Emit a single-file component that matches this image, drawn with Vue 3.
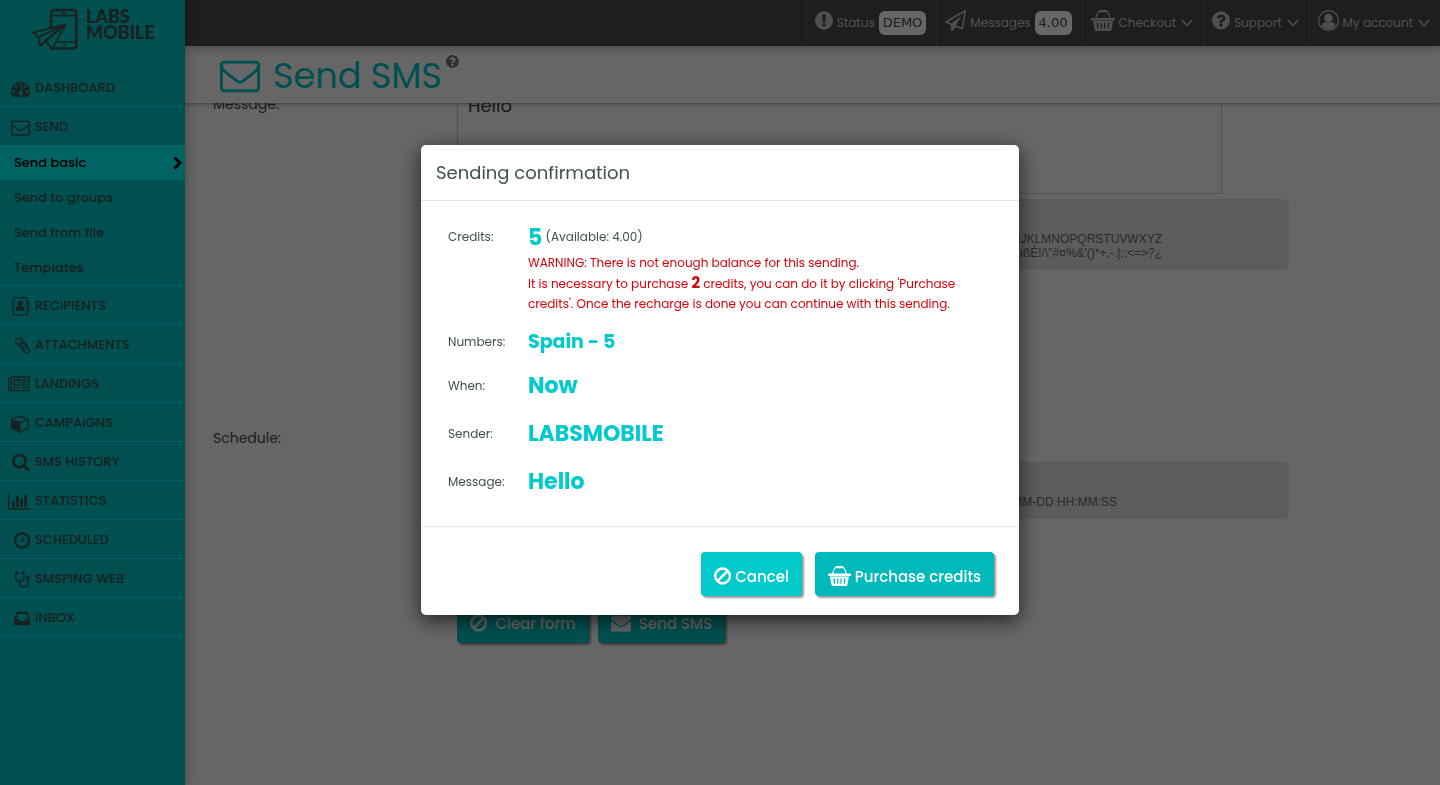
<template>
  <div class="page">
    <aside class="sidebar">
      <a class="logo" href="#">
        <svg viewBox="0 0 47 43" aria-hidden="true">
          <rect class="line" x="19" y="2" width="25.4" height="38.4" rx="2.6" />
          <path class="line thin" d="M19 7.6H44.4M24 34H44.4M29 4.9h5M31 37.2h3" />
          <path class="plane" d="M33.3 16.3 1 24.6l5.6 4.8ZM33.3 16.3 6.6 29.4 8.2 38l5-5.4ZM33.3 16.3 13 32.6l7.4 8.6ZM33.3 16.3 8.2 38" />
        </svg>
        <span>LABS<br />MOBILE</span>
      </a>
      <nav>
        <template v-for="item in menu" :key="item.label">
          <a href="#" class="menu-item" :class="{ open: item.children }">
            <span class="menu-icon">
              <svg :viewBox="icons[item.icon].box"><path :d="icons[item.icon].d" /></svg>
            </span>
            {{ item.label }}
          </a>
          <div v-if="item.children" class="submenu">
            <a v-for="(child, idx) in item.children" :key="child" href="#" :class="{ active: idx === 0 }">
              {{ child }}
              <svg v-if="idx === 0" viewBox="0 0 10 14"><path d="m1.5 1.5 5.5 5.5-5.5 5.5" /></svg>
            </a>
          </div>
        </template>
      </nav>
    </aside>

    <div class="main">
      <header class="topbar">
        <a v-for="item in topItems" :key="item.label" href="#" class="top-item">
          <svg class="top-icon" :viewBox="icons[item.icon].box"><path :d="icons[item.icon].d" /></svg>
          <span>{{ item.label }}</span>
          <span v-if="item.badge" class="badge">{{ item.badge }}</span>
          <svg v-else class="caret" viewBox="0 0 12 8"><path d="m1 1 5 5.4L11 1" /></svg>
        </a>
      </header>

      <div class="heading">
        <svg class="heading-icon" :viewBox="icons.envelopeO.box"><path :d="icons.envelopeO.d" /></svg>
        <h1>Send SMS</h1>
        <svg class="heading-help" :viewBox="icons.question.box"><path :d="icons.question.d" /></svg>
      </div>

      <div class="content">
        <form class="form" @submit.prevent="showModal = true">
          <div class="form-row message-row">
            <label for="message">Message:</label>
            <div>
              <textarea id="message" v-model="message"></textarea>
              <p class="help message-help">
                0123456789 abcdefghijklmnopqrstuvwxyz ABCDEFGHIJKLMNOPQRSTUVWXYZ<br />
                ÄäàÅåÆæèéìñòÖöøÜüùß{{ symbols }}
              </p>
            </div>
          </div>
          <div class="form-row schedule-row">
            <label for="schedule">Schedule:</label>
            <div>
              <input id="schedule" v-model="schedule" type="text" />
              <p class="help schedule-help">YYYY-MM-DD HH:MM:SS</p>
            </div>
          </div>
          <div class="form-row">
            <div class="form-actions">
              <button type="reset" class="btn">
                <svg :viewBox="icons.ban.box"><path :d="icons.ban.d" /></svg>
                Clear form
              </button>
              <button type="submit" class="btn">
                <svg :viewBox="icons.envelope.box"><path :d="icons.envelope.d" /></svg>
                Send SMS
              </button>
            </div>
          </div>
        </form>
      </div>
    </div>

    <div v-if="showModal" class="overlay">
      <section class="modal" role="dialog" aria-labelledby="modal-title">
        <h2 id="modal-title">Sending confirmation</h2>
        <dl>
          <dt class="credits-label">Credits:</dt>
          <dd class="credits">
            <div><strong>5</strong> (Available: 4.00)</div>
            <p class="warning">WARNING: There is not enough balance for this sending.</p>
            <p class="warning">
              It is necessary to purchase <b>2</b> credits, you can do it by clicking 'Purchase
              credits'. Once the recharge is done you can continue with this sending.
            </p>
          </dd>
          <dt>Numbers:</dt>
          <dd class="numbers">Spain - 5</dd>
          <dt>When:</dt>
          <dd>Now</dd>
          <dt>Sender:</dt>
          <dd>LABSMOBILE</dd>
          <dt>Message:</dt>
          <dd>{{ message }}</dd>
        </dl>
        <footer>
          <button type="button" class="btn" @click="showModal = false">
            <svg :viewBox="icons.ban.box"><path :d="icons.ban.d" /></svg>
            Cancel
          </button>
          <button type="button" class="btn purchase">
            <svg :viewBox="icons.basket.box"><path :d="icons.basket.d" /></svg>
            Purchase credits
          </button>
        </footer>
      </section>
    </div>
  </div>
</template>

<script setup>
import { ref } from 'vue'

const showModal = ref(true)
const message = ref('Hello')
const schedule = ref('')
const symbols = 'É!/\\"#¤%&\'()*+,-.|:;<=>?¿'

const menu = [
  { label: 'DASHBOARD', icon: 'dashboard' },
  {
    label: 'SEND',
    icon: 'envelopeO',
    children: ['Send basic', 'Send to groups', 'Send from file', 'Templates'],
  },
  { label: 'RECIPIENTS', icon: 'book' },
  { label: 'ATTACHMENTS', icon: 'clip' },
  { label: 'LANDINGS', icon: 'news' },
  { label: 'CAMPAIGNS', icon: 'cube' },
  { label: 'SMS HISTORY', icon: 'search' },
  { label: 'STATISTICS', icon: 'chart' },
  { label: 'SCHEDULED', icon: 'clock' },
  { label: 'SMSPING WEB', icon: 'stethoscope' },
  { label: 'INBOX', icon: 'inbox' },
]

const topItems = [
  { label: 'Status', icon: 'exclamation', badge: 'DEMO' },
  { label: 'Messages', icon: 'plane', badge: '4.00' },
  { label: 'Checkout', icon: 'basket' },
  { label: 'Support', icon: 'question' },
  { label: 'My account', icon: 'user' },
]

const icons = {
  dashboard: {
    box: '0 0 1792 1792',
    d: 'M384 1152q0-53-37.5-90.5t-90.5-37.5-90.5 37.5-37.5 90.5 37.5 90.5 90.5 37.5 90.5-37.5 37.5-90.5zm192-448q0-53-37.5-90.5t-90.5-37.5-90.5 37.5-37.5 90.5 37.5 90.5 90.5 37.5 90.5-37.5 37.5-90.5zm428 481l101-382q6-26-7.5-48.5t-38.5-29.5-48 6.5-30 39.5l-101 382q-60 5-107 43.5t-63 98.5q-20 77 20 146t117 89 146-20 89-117q16-60-6-117t-72-91zm660-33q0-53-37.5-90.5t-90.5-37.5-90.5 37.5-37.5 90.5 37.5 90.5 90.5 37.5 90.5-37.5 37.5-90.5zm-640-640q0-53-37.5-90.5t-90.5-37.5-90.5 37.5-37.5 90.5 37.5 90.5 90.5 37.5 90.5-37.5 37.5-90.5zm448 192q0-53-37.5-90.5t-90.5-37.5-90.5 37.5-37.5 90.5 37.5 90.5 90.5 37.5 90.5-37.5 37.5-90.5zm320 448q0 261-141 483-19 29-54 29h-1402q-35 0-54-29-141-221-141-483 0-182 71-348t191-286 286-191 348-71 348 71 286 191 191 286 71 348z',
  },
  envelopeO: {
    box: '0 0 1792 1792',
    d: 'M1664 1504v-768q-32 36-69 66-268 206-426 338-51 43-83 67t-86.5 48.5-102.5 24.5h-2q-48 0-102.5-24.5t-86.5-48.5-83-67q-158-132-426-338-37-30-69-66v768q0 13 9.5 22.5t22.5 9.5h1472q13 0 22.5-9.5t9.5-22.5zm0-1051v-24.5l-.5-13-3-12.5-5.5-9-9-7.5-14-2.5h-1472q-13 0-22.5 9.5t-9.5 22.5q0 168 147 284 193 152 401 317 6 5 35 29.5t46 37.5 44.5 31.5 50.5 27.5 43 9h2q20 0 43-9t50.5-27.5 44.5-31.5 46-37.5 35-29.5q208-165 401-317 54-43 100.5-115.5t46.5-131.5zm128-37v1088q0 66-47 113t-113 47h-1472q-66 0-113-47t-47-113v-1088q0-66 47-113t113-47h1472q66 0 113 47t47 113z',
  },
  envelope: {
    box: '0 0 1792 1792',
    d: 'M1792 710v794q0 66-47 113t-113 47h-1472q-66 0-113-47t-47-113v-794q44 49 101 87 362 246 497 345 57 42 92.5 65.5t94.5 48 110 24.5h2q51 0 110-24.5t94.5-48 92.5-65.5q170-123 498-345 57-39 100-87zm0-294q0 79-49 151t-122 123q-376 261-468 325-10 7-42.5 31t-54 38.5-52 32.5-57.5 27-50 9h-2q-23 0-50-9t-57.5-27-52-32.5-54-38.5-42.5-31q-91-64-262-182.5t-205-142.5q-62-42-117-115.5t-55-136.5q0-78 41.5-130t118.5-52h1472q65 0 112.5 47t47.5 113z',
  },
  book: {
    box: '0 0 18 19',
    d: 'M2 0h12.4A1.6 1.6 0 0 1 16 1.6v15.3a1.6 1.6 0 0 1-1.6 1.6H2A1.6 1.6 0 0 1 .4 16.9V1.6A1.6 1.6 0 0 1 2 0ZM1.7 1.3v15.9h13V1.3ZM16.4 4.2h1.4v2.2h-1.4ZM16.4 8.2h1.4v2.2h-1.4ZM16.4 12.2h1.4v2.2h-1.4ZM8.2 3.8a2.6 2.6 0 0 1 0 5.4 2.6 2.6 0 0 1 0-5.4ZM5.6 8.9q2.6 1.6 5.2 0 2 .6 2 3.6 0 1.4-1.4 1.4H5q-1.4 0-1.4-1.4 0-3 2-3.6Z',
  },
  clip: {
    box: '192 0 1408 1792',
    d: 'M1596 1385q0 117-79 196t-196 79q-135 0-235-100l-777-776q-113-115-113-271 0-159 110-270t269-111q158 0 273 113l605 606q10 10 10 22 0 16-30.5 46.5t-46.5 30.5q-13 0-23-10l-606-607q-79-77-181-77-106 0-179 75t-73 181q0 105 76 181l776 777q63 63 145 63 64 0 106-42t42-106q0-82-63-145l-581-581q-26-24-60-24-29 0-48 19t-19 48q0 32 25 59l410 410q10 10 10 22 0 16-31 47t-47 31q-12 0-22-10l-410-410q-63-61-63-149 0-82 57-139t139-57q88 0 149 63l581 581q100 98 100 235z',
  },
  news: {
    box: '0 0 2048 1792',
    d: 'M1024 512h-384v384h384v-384zm128 640v128h-640v-128h640zm0-768v640h-640v-640h640zm640 768v128h-512v-128h512zm0-256v128h-512v-128h512zm0-256v128h-512v-128h512zm0-256v128h-512v-128h512zm-1536 960v-960h-128v960q0 26 19 45t45 19 45-19 19-45zm1664 0v-1088h-1536v1088q0 33-11 64h1483q26 0 45-19t19-45zm128-1216v1216q0 80-56 136t-136 56h-1664q-80 0-136-56t-56-136v-1088h256v-128h1792z',
  },
  cube: {
    box: '0 0 1792 1792',
    d: 'M896 1629l640-349v-636l-640 233v752zm-64-865l698-254-698-254-698 254zm832-252v768q0 35-18 65t-49 47l-704 384q-28 16-61 16t-61-16l-704-384q-31-17-49-47t-18-65v-768q0-40 23-73t61-47l704-256q22-8 44-8t44 8l704 256q38 14 61 47t23 73z',
  },
  search: {
    box: '64 64 1664 1792',
    d: 'M1216 832q0-185-131.5-316.5t-316.5-131.5-316.5 131.5-131.5 316.5 131.5 316.5 316.5 131.5 316.5-131.5 131.5-316.5zm512 832q0 52-38 90t-90 38q-54 0-90-38l-343-342q-179 124-399 124-143 0-273.5-55.5t-225-150-150-225-55.5-273.5 55.5-273.5 150-225 225-150 273.5-55.5 273.5 55.5 225 150 150 225 55.5 273.5q0 220-124 399l343 343q37 37 37 90z',
  },
  chart: {
    box: '0 0 2048 1792',
    d: 'M640 896v512h-256v-512h256zm384-512v1024h-256v-1024h256zm1024 1152v128h-2048v-1536h128v1408h1920zm-640-896v768h-256v-768h256zm384-384v1152h-256v-1152h256z',
  },
  clock: {
    box: '128 0 1536 1792',
    d: 'M1024 544v448q0 14-9 23t-23 9h-320q-14 0-23-9t-9-23v-64q0-14 9-23t23-9h224v-352q0-14 9-23t23-9h64q14 0 23 9t9 23zm416 352q0-148-73-273t-198-198-273-73-273 73-198 198-73 273 73 273 198 198 273 73 273-73 198-198 73-273zm224 0q0 209-103 385.5t-279.5 279.5-385.5 103-385.5-103-279.5-279.5-103-385.5 103-385.5 279.5-279.5 385.5-103 385.5 103 279.5 279.5 103 385.5z',
  },
  stethoscope: {
    box: '192 0 1408 1792',
    d: 'M1472 704q0-26-19-45t-45-19-45 19-19 45 19 45 45 19 45-19 19-45zm128 0q0 62-35.5 111t-92.5 70v395q0 159-131.5 271.5t-316.5 112.5-316.5-112.5-131.5-271.5v-132q-164-20-274-128t-110-252v-512q0-26 19-45t45-19q6 0 16 2 17-30 47-48t65-18q53 0 90.5 37.5t37.5 90.5-37.5 90.5-90.5 37.5q-33 0-64-18v402q0 106 94 181t226 75 226-75 94-181v-402q-31 18-64 18-53 0-90.5-37.5t-37.5-90.5 37.5-90.5 90.5-37.5q35 0 65 18t47 48q10-2 16-2 26 0 45 19t19 45v512q0 144-110 252t-274 128v132q0 106 94 181t226 75 226-75 94-181v-395q-57-21-92.5-70t-35.5-111q0-80 56-136t136-56 136 56 56 136z',
  },
  inbox: {
    box: '128 0 1536 1792',
    d: 'M1151 960h316q-1-3-2.5-8.5t-2.5-7.5l-212-496h-708l-212 496q-1 3-2.5 8.5t-2.5 7.5h316l95 192h320zm513 30v482q0 26-19 45t-45 19h-1408q-26 0-45-19t-19-45v-482q0-62 25-123l238-552q10-25 36.5-42t52.5-17h832q26 0 52.5 17t36.5 42l238 552q25 61 25 123z',
  },
  exclamation: {
    box: '128 0 1536 1792',
    d: 'M896 128q209 0 385.5 103t279.5 279.5 103 385.5-103 385.5-279.5 279.5-385.5 103-385.5-103-279.5-279.5-103-385.5 103-385.5 279.5-279.5 385.5-103zm128 1247v-190q0-14-9-23.5t-22-9.5h-192q-13 0-23 10t-10 23v190q0 13 10 23t23 10h192q13 0 22-9.5t9-23.5zm-2-344l18-621q0-12-10-18-10-8-24-8h-220q-14 0-24 8-10 6-10 18l17 621q0 10 10 17.5t24 7.5h185q14 0 23.5-7.5t10.5-17.5z',
  },
  question: {
    box: '128 0 1536 1792',
    d: 'M1024 1376v-192q0-14-9-23t-23-9h-192q-14 0-23 9t-9 23v192q0 14 9 23t23 9h192q14 0 23-9t9-23zm256-672q0-88-55.5-163t-138.5-116-170-41q-243 0-371 213-15 24 8 42l132 100q7 6 19 6 16 0 25-12 53-68 86-92 34-24 86-24 48 0 85.5 26t37.5 59q0 38-20 61t-68 45q-63 28-115.5 86.5t-52.5 125.5v36q0 14 9 23t23 9h192q14 0 23-9t9-23q0-19 21.5-49.5t54.5-49.5q32-18 49-28.5t46-35 44.5-48 28-60.5 12.5-81zm384 192q0 209-103 385.5t-279.5 279.5-385.5 103-385.5-103-279.5-279.5-103-385.5 103-385.5 279.5-279.5 385.5-103 385.5 103 279.5 279.5 103 385.5z',
  },
  plane: {
    box: '0 0 1792 1792',
    d: 'M1764 11q33 24 27 64l-256 1536q-5 29-32 45-14 8-31 8-11 0-24-5l-527-215-298 327q-18 21-47 21-14 0-23-4-19-7-30-23.5t-11-36.5v-452l-472-193q-37-14-40-55-3-39 32-59l1664-960q35-21 68 2zm-342 1499l221-1323-1434 827 336 137 863-639-478 797z',
  },
  ban: {
    box: '128 0 1536 1792',
    d: 'M1440 893q0-161-87-295l-754 753q137 89 297 89 111 0 211.5-43.5t173.5-116.5 116-174.5 43-212.5zm-999 299l755-754q-135-91-300-91-148 0-273 73t-198 199-73 274q0 162 89 299zm1223-299q0 157-61 300t-163.5 246-245 164-298.5 61-298.5-61-245-164-163.5-246-61-300 61-299.5 163.5-245.5 245-164 298.5-61 298.5 61 245 164 163.5 245.5 61 299.5z',
  },
  basket: {
    box: '0 0 24 21',
    d: 'M1 8h22a1 1 0 0 1 0 2.6H1A1 1 0 0 1 1 8ZM2 11h20l-1.6 8.8q-.2 1.2-1.4 1.2H5q-1.2 0-1.4-1.2ZM5.6 13h1.5l.4 5.6H6.3ZM9.6 13h1.4v5.6H9.8ZM13 13h1.4l-.2 5.6H13ZM16.9 13h1.5l-.7 5.6h-1.2ZM4.2 7.8l2-5.2Q6.6 1.2 8 1.2V.5q.1-.5.6-.5h6.8q.5 0 .6.5v.7q1.4 0 1.8 1.4l2 5.2h-1.3L16.7 3q-.3-.7-1.1-.7H8.4q-.8 0-1.1.7L5.5 7.8Z',
  },
  user: {
    box: '0 0 21 21',
    d: 'M10.5 0a10.5 10.5 0 0 1 0 21 10.5 10.5 0 0 1 0-21ZM10.5 1.2a9.3 9.3 0 0 0 0 18.6 9.3 9.3 0 0 0 0-18.6ZM10.5 3.8a4.2 4.2 0 0 1 0 8.6 4.2 4.2 0 0 1 0-8.6ZM7.4 12q3.1 2 6.2 0 3.2.7 4 3.6-2.6 3.7-7.1 3.7t-7.1-3.7q.8-2.9 4-3.6Z',
  },
}
</script>

<style>
body {
  margin: 0;
}
</style>

<style scoped>
.page {
  display: flex;
  height: 100vh;
  min-height: 640px;
  overflow: hidden;
  background: #fff;
  color: #3e5050;
  font-family: Poppins, Inter, sans-serif;
  font-size: 13px;
}

a {
  color: inherit;
  text-decoration: none;
}

svg {
  display: block;
  flex: none;
  fill: currentColor;
  fill-rule: evenodd;
}

/* sidebar */
.sidebar {
  width: 185px;
  flex: none;
  background: #00c8ca;
  box-shadow: 0 0 12px rgba(0, 0, 0, 0.35);
  z-index: 3;
}

.logo {
  display: flex;
  gap: 7px;
  height: 60px;
  padding: 8px 0 0 32px;
  box-sizing: border-box;
  font-family: Lato, sans-serif;
  font-size: 18px;
  font-weight: 900;
  line-height: 16px;
}

.logo svg {
  width: 47px;
  height: 43px;
}

.logo .line {
  fill: none;
  stroke: currentColor;
  stroke-width: 2.4;
}

.logo .thin {
  stroke-width: 1.6;
}

.logo .plane {
  fill: #00c8ca;
  stroke: currentColor;
  stroke-width: 1.8;
  stroke-linejoin: round;
}

nav {
  padding-top: 8px;
}

.menu-item {
  display: flex;
  align-items: center;
  gap: 5px;
  height: 39px;
  padding-top: 2px;
  box-sizing: border-box;
  border-bottom: 1px solid #00f5f5;
  font-weight: 500;
}

.menu-item.open {
  height: 38px;
  border-bottom: 0;
}

.menu-icon {
  display: flex;
  justify-content: flex-end;
  width: 30px;
}

.menu-icon svg {
  height: 19px;
}

.submenu {
  border-bottom: 1px solid #00f5f5;
}

.submenu a {
  display: flex;
  align-items: center;
  justify-content: space-between;
  height: 35px;
  padding: 0 2px 0 14px;
  font-weight: 500;
}

.submenu .active {
  background: #00fafa;
  color: #000;
}

.submenu svg {
  width: 10px;
  height: 14px;
  fill: none;
  stroke: currentColor;
  stroke-width: 3;
}

/* main column */
.main {
  display: flex;
  flex: 1;
  flex-direction: column;
  min-width: 0;
}

.topbar {
  display: flex;
  flex: none;
  justify-content: flex-end;
  height: 46px;
  background: #4b4b4b;
  color: #c6c6c6;
  font-size: 12px;
  box-shadow: 0 0 10px rgba(0, 0, 0, 0.4);
  z-index: 2;
}

.top-item {
  display: flex;
  align-items: center;
  gap: 4px;
  padding: 0 10px 1px 8px;
  border-left: 1px solid #626262;
}

.top-icon {
  height: 21px;
  padding-bottom: 5px;
}

.badge {
  padding: 0 4px;
  border-radius: 6px;
  background: #fff;
  color: #4b4b4b;
  font-family: "DejaVu Sans", sans-serif;
  font-size: 13px;
  line-height: 24px;
}

.caret {
  width: 12px;
  height: 8px;
  margin-left: 1px;
  fill: none;
  stroke: currentColor;
  stroke-width: 1.5;
}

.heading {
  display: flex;
  flex: none;
  align-items: center;
  height: 57px;
  padding-left: 35px;
  background: #fff;
  color: #00c8ca;
  box-shadow: 0 1px 4px rgba(0, 0, 0, 0.4);
  z-index: 1;
}

.heading-icon {
  height: 40px;
}

.heading h1 {
  margin: 2px 4px 0 13px;
  font-size: 35px;
  font-weight: 400;
}

.heading-help {
  height: 15px;
  margin-bottom: 26px;
  color: #777;
}

/* form */
.content {
  flex: 1;
  overflow: hidden;
}

.form {
  margin: -9px 151px 0 28px;
}

.form-row {
  display: grid;
  grid-template-columns: 244px 1fr;
}

.form-row label {
  font-size: 14px;
  line-height: 20px;
}

.message-row {
  height: 334px;
}

.message-row textarea {
  display: block;
  width: 92%;
  height: 100px;
  padding: 0 10px;
  box-sizing: border-box;
  border: 1px solid #ccc;
  border-top: 0;
  border-radius: 0 0 3px 3px;
  background: #fff;
  color: #3e4444;
  font-family: inherit;
  font-size: 18px;
  line-height: 24px;
  resize: none;
}

.help {
  margin: 5px 0 0;
  border-radius: 6px;
  background: #e6e6e6;
  color: #6b6b6b;
  font-family: "Liberation Sans", sans-serif;
  font-size: 12px;
  line-height: 14px;
  text-align: right;
}

.message-help {
  padding: 33px 127px 10px 0;
}

.schedule-row {
  height: 171px;
}

.schedule-row input {
  width: 240px;
  height: 29px;
  box-sizing: border-box;
  border: 1px solid #ccc;
}

.schedule-help {
  padding: 33px 172px 10px 0;
}

.form-actions {
  display: flex;
  grid-column: 2;
  gap: 9px;
}

.btn {
  display: flex;
  align-items: center;
  gap: 8px;
  height: 44px;
  padding: 4px 13px 0;
  border: 0;
  border-radius: 4px;
  background: #00c8ca;
  box-shadow: 2px 2px 2px rgba(0, 0, 0, 0.4);
  color: #fff;
  font-family: inherit;
  font-size: 15px;
  font-weight: 500;
  cursor: pointer;
}

.btn svg {
  height: 20px;
}

/* confirmation dialog */
.overlay {
  position: fixed;
  inset: 0;
  display: flex;
  align-items: flex-start;
  justify-content: center;
  padding-top: 145px;
  background: rgba(0, 0, 0, 0.6);
  z-index: 10;
}

.modal {
  width: 598px;
  border-radius: 5px;
  background: #fff;
  box-shadow: 0 5px 20px rgba(0, 0, 0, 0.7);
}

.modal h2 {
  margin: 0;
  padding: 0 15px;
  border-bottom: 1px solid #e5e5e5;
  font-size: 18px;
  font-weight: 400;
  line-height: 55px;
}

.modal dl {
  display: grid;
  grid-template-columns: 80px 1fr;
  align-items: center;
  margin: 0;
  padding: 20px 27px;
  font-size: 12px;
}

.modal dd {
  margin: 0;
  color: #00cacc;
  font-size: 22px;
  font-weight: 700;
  line-height: 48px;
}

.credits-label {
  align-self: start;
  line-height: 32px;
}

.modal .credits {
  padding-bottom: 8px;
  color: inherit;
  font-size: 12px;
  font-weight: 400;
  line-height: 32px;
}

.credits strong {
  color: #00cacc;
  font-size: 22px;
  font-weight: 700;
  line-height: 24px;
  vertical-align: middle;
}

.warning {
  max-width: 440px;
  margin: 0;
  color: #d9000a;
  line-height: 20px;
}

.warning b {
  font-size: 15px;
  font-weight: 700;
}

.modal .numbers {
  font-size: 19px;
  line-height: 40px;
}

.modal footer {
  display: flex;
  justify-content: flex-end;
  gap: 13px;
  padding: 25px 25px 19px;
  border-top: 1px solid #e5e5e5;
}

.modal .btn {
  gap: 4px;
  background: #00cacc;
}

.modal .purchase {
  background: #00b9bb;
}
</style>
